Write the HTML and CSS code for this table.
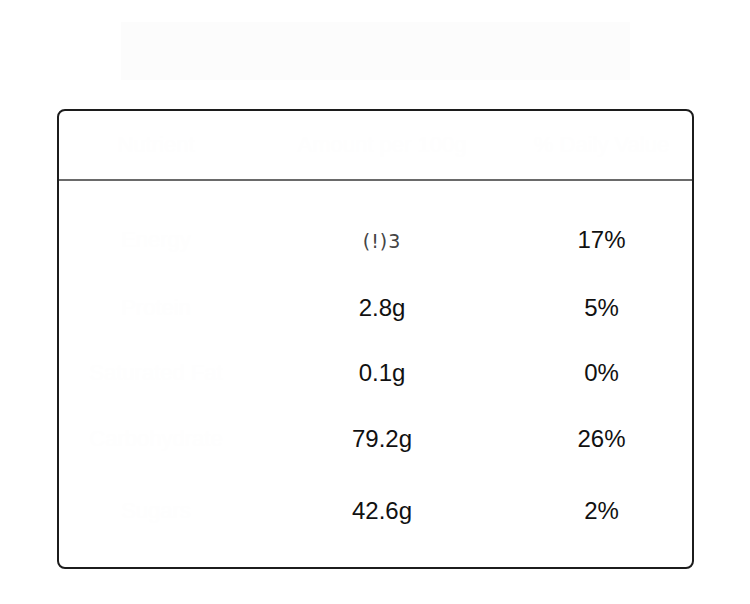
FILE: index.html
```html
<!DOCTYPE html>
<html>
<head>
<meta charset="utf-8">
<link rel="stylesheet" href="styles.css">
</head>
<body>
<div class="page">
  <h1 class="title">Nutrition Facts</h1>
  <div class="card">
    <div class="head">
      <div class="cell label">Nutrient</div>
      <div class="cell">Amount per 100g</div>
      <div class="cell">% Daily Value</div>
    </div>
    <div class="body">
      <div class="row r1">
        <div class="cell label">Energy</div>
        <div class="cell"><span class="glitch">(!)3</span></div>
        <div class="cell">17%</div>
      </div>
      <div class="row r2">
        <div class="cell label">Protein</div>
        <div class="cell">2.8g</div>
        <div class="cell">5%</div>
      </div>
      <div class="row r3">
        <div class="cell label">Saturated Fat</div>
        <div class="cell">0.1g</div>
        <div class="cell">0%</div>
      </div>
      <div class="row r4">
        <div class="cell label">Carbohydrate</div>
        <div class="cell">79.2g</div>
        <div class="cell">26%</div>
      </div>
      <div class="row r5">
        <div class="cell label">Sugars</div>
        <div class="cell">42.6g</div>
        <div class="cell">2%</div>
      </div>
    </div>
  </div>
</div>
</body>
</html>
```

FILE: styles.css
```css
html, body {
  margin: 0;
  padding: 0;
  background: #ffffff;
}
body {
  font-family: "Liberation Sans", Arial, sans-serif;
  color: #111111;
}
.page {
  width: 750px;
  height: 604px;
  box-sizing: border-box;
  padding: 22px 56px 0 57px;
}
.title {
  margin: 0 64px 0 64px;
  height: 58px;
  background: #fcfcfc;
  color: #fcfcfc;
  font-size: 32px;
  font-weight: normal;
  line-height: 58px;
  text-align: center;
}
.card {
  margin-top: 29px;
  height: 460px;
  box-sizing: border-box;
  border: 2px solid #1c1c1c;
  border-radius: 8px;
  display: flex;
  flex-direction: column;
}
.head {
  height: 68px;
  border-bottom: 2px solid #6a6a6a;
  display: grid;
  grid-template-columns: 194px 258px 1fr;
  align-items: center;
  color: #fefefe;
  font-size: 22px;
}
.head .cell {
  text-align: center;
}
.body {
  padding-top: 24px;
  display: flex;
  flex-direction: column;
}
.row {
  display: grid;
  grid-template-columns: 194px 258px 1fr;
  align-items: center;
  font-size: 24px;
}
.row .cell {
  text-align: center;
}
.row .label {
  color: #fefefe;
  font-size: 22px;
}
.r1 { height: 70px; }
.r2 { height: 66px; }
.r3 { height: 64px; }
.r4 { height: 68px; }
.r5 { height: 76px; }
.glitch {
  font-size: 19px;
  color: #444444;
  letter-spacing: 1px;
  font-family: "DejaVu Sans", sans-serif;
}
```
